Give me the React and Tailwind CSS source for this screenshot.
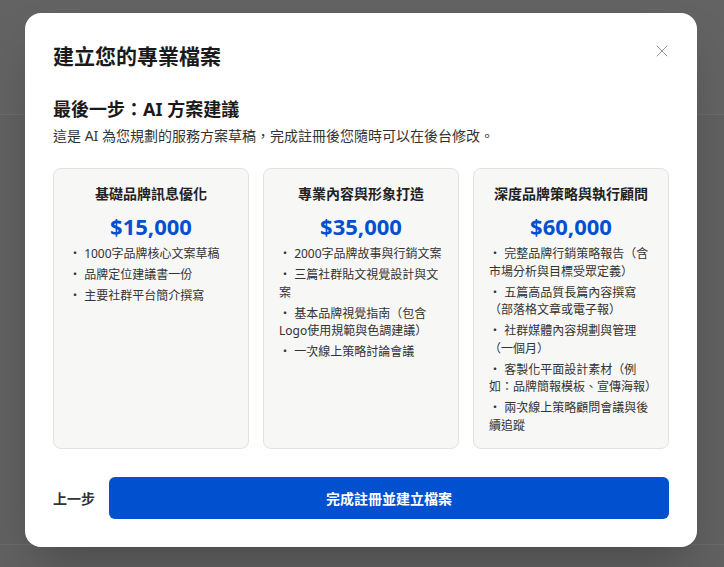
import React from "react";
import { X } from "lucide-react";

const plans = [
  {
    name: "基礎品牌訊息優化",
    price: "$15,000",
    items: ["1000字品牌核心文案草稿", "品牌定位建議書一份", "主要社群平台簡介撰寫"],
  },
  {
    name: "專業內容與形象打造",
    price: "$35,000",
    items: [
      "2000字品牌故事與行銷文案",
      "三篇社群貼文視覺設計與文案",
      "基本品牌視覺指南（包含Logo使用規範與色調建議）",
      "一次線上策略討論會議",
    ],
  },
  {
    name: "深度品牌策略與執行顧問",
    price: "$60,000",
    items: [
      "完整品牌行銷策略報告（含市場分析與目標受眾定義）",
      "五篇高品質長篇內容撰寫（部落格文章或電子報）",
      "社群媒體內容規劃與管理（一個月）",
      "客製化平面設計素材（例如：品牌簡報模板、宣傳海報）",
      "兩次線上策略顧問會議與後續追蹤",
    ],
  },
];

function PlanCard({ plan }) {
  return (
    <div className="bg-[#f7f7f6] border border-[#e2e2e0] rounded-lg px-[15px] pt-[15px] pb-[14px]">
      <h3 className="text-center text-[14px] font-bold text-[#222] leading-5">{plan.name}</h3>
      <div className="text-center text-[22px] font-bold text-[#0050cf] leading-8 mt-[6px]">{plan.price}</div>
      <ul className="mt-[3px] flex flex-col gap-[3.5px]">
        {plan.items.map((it) => (
          <li key={it} className="text-[12px] leading-[17.5px] text-[#333]">
            ・ {it}
          </li>
        ))}
      </ul>
    </div>
  );
}

export default function App() {
  return (
    <div
      className="relative w-[724px] h-[567px] bg-[#616161] overflow-hidden"
      style={{ fontFamily: '"Noto Sans", "Noto Sans CJK TC", sans-serif' }}
    >
      <div className="h-[115px] border-b border-[#6b6b6b] bg-[#636363]"></div>
      <div className="absolute left-0 right-0 top-[544px] border-t border-[#6b6b6b]"></div>

      <div className="absolute left-[25px] top-[13px] w-[672px] h-[534px] bg-white rounded-2xl shadow-2xl px-7 pt-7 pb-7 flex flex-col">
        <div className="flex items-start justify-between">
          <h1 className="text-[21px] font-bold text-[#1a1a1a] leading-[30px]">建立您的專業檔案</h1>
          <X size={20} strokeWidth={1.2} className="text-[#9a9a9a] mr-[-3px]" />
        </div>

        <h2 className="mt-[25px] text-[18px] font-bold text-[#1a1a1a] leading-[26px]">最後一步：AI 方案建議</h2>
        <p className="mt-[4px] text-[14px] text-[#333] leading-5">
          這是 AI 為您規劃的服務方案草稿，完成註冊後您隨時可以在後台修改。
        </p>

        <div className="mt-[22px] grid grid-cols-3 gap-[14px]">
          {plans.map((p) => (
            <PlanCard key={p.name} plan={p} />
          ))}
        </div>

        <div className="mt-7 flex items-center gap-[14px]">
          <button className="text-[14px] font-bold text-[#333] px-0 w-[42px] text-left">上一步</button>
          <button className="flex-1 h-[42px] rounded-md bg-[#0050cf] text-white text-[14px] font-bold">
            完成註冊並建立檔案
          </button>
        </div>
      </div>
    </div>
  );
}
